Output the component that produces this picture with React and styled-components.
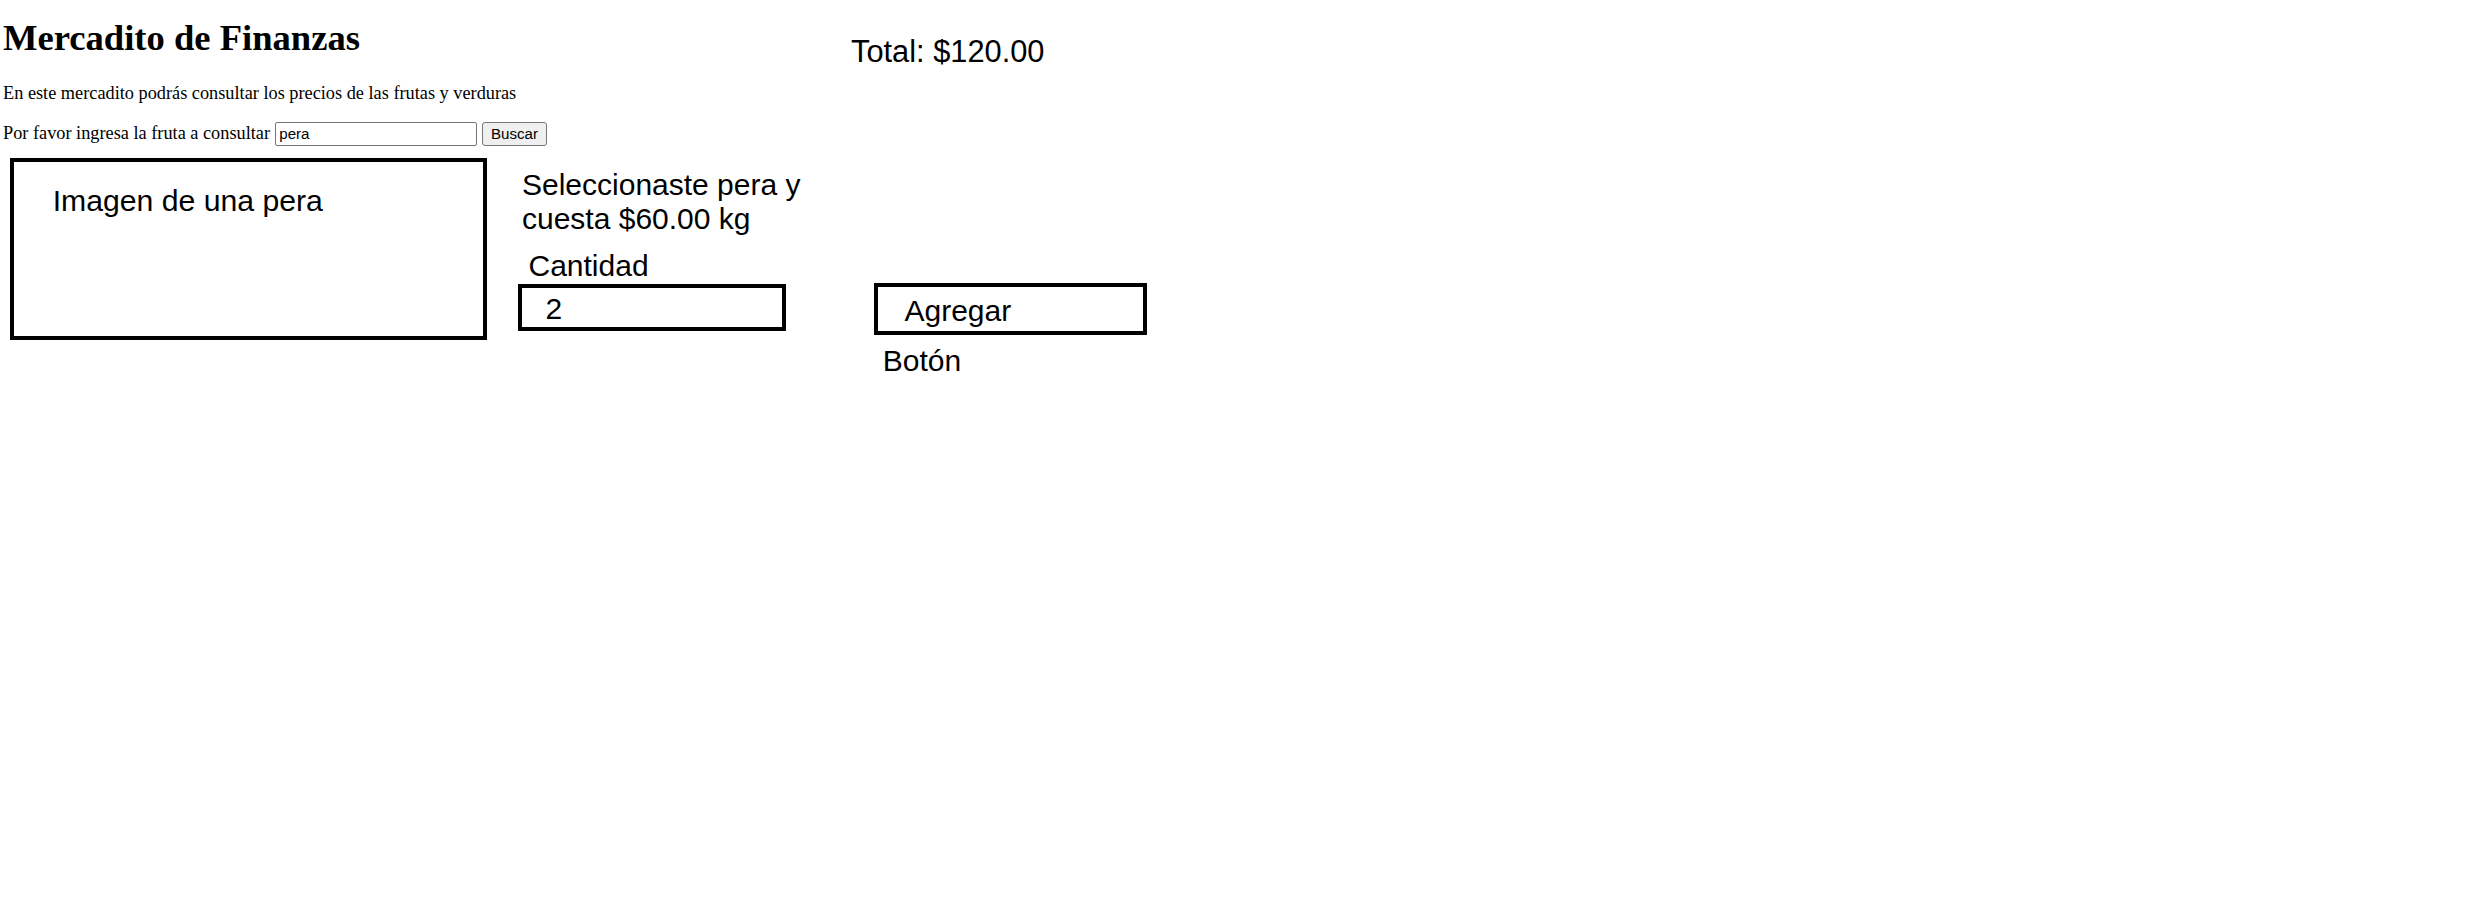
import React, { useState } from "react";
import styled, { createGlobalStyle } from "styled-components";

const GlobalStyle = createGlobalStyle`
  html, body {
    margin: 0;
    padding: 0;
    background: #ffffff;
    color: #000000;
    font-family: "Liberation Serif", "Times New Roman", serif;
  }
`;

const Page = styled.div`
  padding: 17px 0 0 3px;
`;

const Header = styled.header`
  display: grid;
  grid-template-columns: 848px auto;
  align-items: start;
`;

const Title = styled.h1`
  margin: 0;
  font-size: 36.6px;
  line-height: 42px;
  font-weight: bold;
`;

const Total = styled.div`
  margin-top: 18px;
  font-family: "Liberation Sans", Arial, sans-serif;
  font-size: 30.8px;
  line-height: 34px;
`;

const Intro = styled.p`
  margin: 13.7px 0 0;
  font-size: 18.3px;
  line-height: 21px;
`;

const SearchRow = styled.form`
  display: flex;
  align-items: center;
  margin-top: 18.6px;
`;

const Label = styled.label`
  width: 272.3px;
  font-size: 18.3px;
  line-height: 21px;
  padding-bottom: 1.6px;
  white-space: nowrap;
`;

const SearchInput = styled.input`
  box-sizing: border-box;
  width: 201.4px;
  height: 23.4px;
  margin: 0;
  padding: 1px 3px;
  border: 1px solid #767676;
  border-radius: 2px;
  font-family: "Liberation Sans", Arial, sans-serif;
  font-size: 15.1px;
  color: #000;
  outline: none;
`;

const SearchButton = styled.button`
  box-sizing: border-box;
  width: 64.4px;
  height: 23.4px;
  margin: 0 0 0 5.6px;
  padding: 0;
  background: #efefef;
  border: 1px solid #767676;
  border-radius: 3px;
  font-family: "Liberation Sans", Arial, sans-serif;
  font-size: 15.1px;
  color: #000;
`;

const Content = styled.section`
  display: flex;
  align-items: flex-start;
  margin-top: 12.6px;
  padding-left: 7px;
  font-family: "Liberation Sans", Arial, sans-serif;
  font-size: 30px;
  line-height: 34px;
`;

const Frame = styled.div`
  box-sizing: border-box;
  border: 4.5px solid #000;
  width: ${(p) => p.$w};
  height: ${(p) => p.$h};
  padding: ${(p) => p.$pad};
  font-size: ${(p) => p.$size || "inherit"};
`;

const Details = styled.div`
  width: 300px;
  margin-left: 30.4px;
`;

const Selected = styled.div`
  margin-top: 9.8px;
  padding-left: 4.3px;
  line-height: 34.3px;
`;

const Caption = styled.div`
  margin-top: ${(p) => p.$top};
  padding-left: ${(p) => p.$left};
`;

const Actions = styled.div`
  margin: 125px 0 0 56.3px;
`;

const AddButton = styled.button`
  box-sizing: border-box;
  display: block;
  width: 272.7px;
  height: 51.7px;
  margin: 0;
  padding: 3.8px 0 0 26.5px;
  text-align: left;
  background: #fff;
  border: 4.5px solid #000;
  border-radius: 0;
  font: inherit;
  line-height: 34px;
  color: #000;
`;

export default function App() {
  const [fruit, setFruit] = useState("pera");

  return (
    <>
      <GlobalStyle />
      <Page>
        <Header>
          <Title>Mercadito de Finanzas</Title>
          <Total>Total: $120.00</Total>
        </Header>

        <Intro>En este mercadito podrás consultar los precios de las frutas y verduras</Intro>

        <SearchRow onSubmit={(e) => e.preventDefault()}>
          <Label htmlFor="fruta">Por favor ingresa la fruta a consultar</Label>
          <SearchInput
            id="fruta"
            value={fruit}
            onChange={(e) => setFruit(e.target.value)}
          />
          <SearchButton type="submit">Buscar</SearchButton>
        </SearchRow>

        <Content>
          <Frame $w="477.3px" $h="181.7px" $pad="22px 0 0 38.7px" $size="30.2px">
            Imagen de una pera
          </Frame>

          <Details>
            <Selected>
              Seleccionaste pera y
              <br />
              cuesta $60.00 kg
            </Selected>
            <Caption $top="12.8px" $left="10.8px">Cantidad</Caption>
            <Frame $w="268px" $h="46.4px" $pad="4px 0 0 23.8px" style={{ marginTop: 1 }}>
              2
            </Frame>
          </Details>

          <Actions>
            <AddButton type="button">Agregar</AddButton>
            <Caption $top="8.6px" $left="8.8px">Botón</Caption>
          </Actions>
        </Content>
      </Page>
    </>
  );
}
